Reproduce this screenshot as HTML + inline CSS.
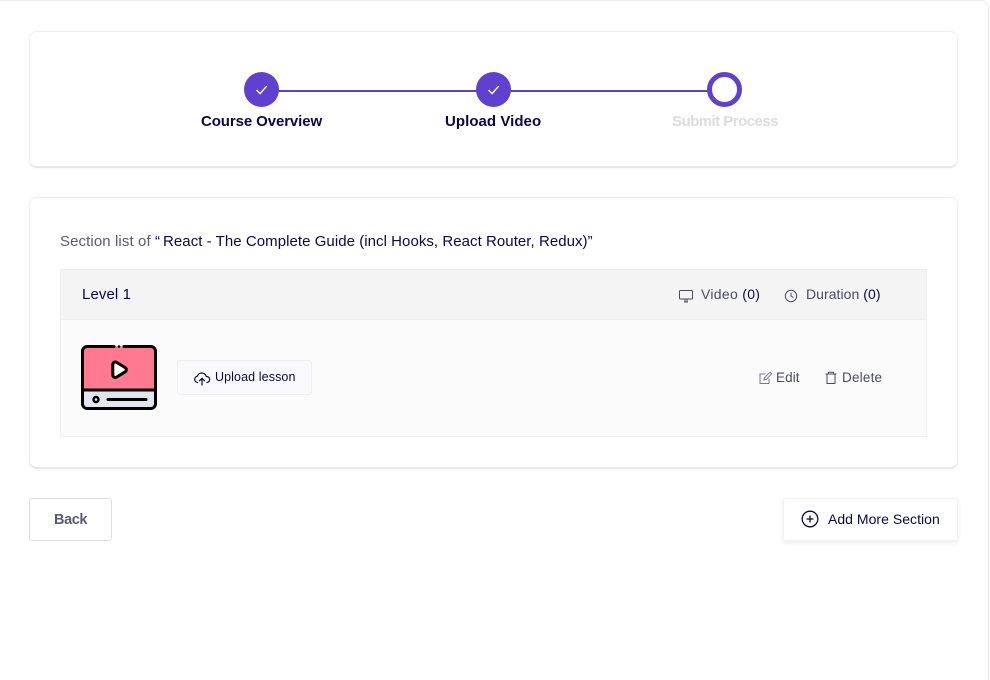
<!DOCTYPE html>
<html>
<head>
<meta charset="utf-8">
<style>
html,body{margin:0;padding:0;background:#fff;width:990px;height:680px;overflow:hidden;}
#w{position:relative;width:990px;height:680px;overflow:hidden;font-family:"Liberation Sans",sans-serif;color:#0b0748;}
.a{position:absolute;}
.t{position:absolute;white-space:nowrap;line-height:20px;height:20px;}
.card{position:absolute;background:#fff;border:1px solid #eeeeee;border-bottom:2px solid #e8e8e8;border-radius:8px;box-sizing:border-box;box-shadow:0 1px 3px rgba(0,0,0,.04);}
.g{color:#4a4a63;}
svg{position:absolute;overflow:visible;}
</style>
</head>
<body>
<div id="w">
<div class="a" style="left:-10px;top:0;width:999px;height:700px;border:1px solid #ededed;border-radius:8px;box-sizing:border-box;border-right:1px solid #ebebeb;"></div>

<div class="card" style="left:29px;top:31px;width:929px;height:137px;"></div>
<div class="a" style="left:262px;top:90px;width:463px;height:2px;background:#5f41cf;"></div>
<div class="a" style="left:244px;top:72px;width:35px;height:35px;border-radius:50%;background:#5f41cf;"></div>
<svg style="left:244px;top:72px" width="35" height="35"><path d="M12.500 18l3.600 3.600 6.600-7.400" fill="none" stroke="#fff" stroke-width="1.400"/></svg>
<div class="a" style="left:476px;top:72px;width:35px;height:35px;border-radius:50%;background:#5f41cf;"></div>
<svg style="left:476px;top:72px" width="35" height="35"><path d="M12.500 18l3.600 3.600 6.600-7.400" fill="none" stroke="#fff" stroke-width="1.400"/></svg>
<div class="a" style="left:707px;top:72px;width:35px;height:35px;border-radius:50%;background:#fff;border:5px solid #5f41cf;box-sizing:border-box;"></div>
<div class="t" style="left:201px;top:112px;font-size:15px;font-weight:700;letter-spacing:-.1px;">Course Overview</div>
<div class="t" style="left:445px;top:112px;font-size:15px;font-weight:700;letter-spacing:.05px;">Upload Video</div>
<div class="t" style="left:672px;top:112px;font-size:15px;font-weight:700;color:#dcdcdc;letter-spacing:-.53px;">Submit Process</div>

<div class="card" style="left:29px;top:197px;width:929px;height:272px;"></div>
<div class="t" style="left:60px;top:232px;font-size:15px;color:#5a5a70;letter-spacing:.1px;">Section list of <span style="color:#0b0748;letter-spacing:.05px;">“<span style="margin-left:3px">React - The Complete Guide (incl Hooks, React Router, Redux)”</span></span></div>

<div class="a" style="left:60px;top:269px;width:867px;height:51px;background:#f4f4f4;border:1px solid #eeeeee;box-sizing:border-box;"></div>
<div class="a" style="left:60px;top:320px;width:867px;height:117px;background:#fbfbfb;border:1px solid #f0f0f0;border-top:0;box-sizing:border-box;"></div>
<div class="t" style="left:82px;top:285px;font-size:15px;letter-spacing:.1px;">Level 1</div>

<svg style="left:679px;top:289px" width="15" height="14" fill="none" stroke="#4a4a63" stroke-width="1"><rect x=".5" y="1.500" width="13" height="8.500" rx="1"/><path d="M5 13h4M6 10v3M8 10v3"/></svg>
<div class="t g" style="left:701px;top:284px;font-size:14px;letter-spacing:.3px;">Video <span style="color:#0b0748">(0)</span></div>
<svg style="left:784px;top:289px" width="14" height="14" fill="none" stroke="#4a4a63" stroke-width="1"><circle cx="7" cy="7" r="5.700"/><path d="M7 3.600V7l2.400 1.600"/></svg>
<div class="t g" style="left:806px;top:284px;font-size:14px;letter-spacing:.05px;">Duration <span style="color:#0b0748">(0)</span></div>

<svg style="left:81px;top:345px" width="76" height="65" viewBox="0 0 76 65">
<rect x="1.200" y="1.200" width="73.600" height="62.600" rx="5" fill="#e1e5ee"/>
<path d="M1.200 45V6.200a5 5 0 0 1 5-5h63.600a5 5 0 0 1 5 5V45z" fill="#ff7a90"/>
<path d="M33 1.500H6.200a4.700 4.700 0 0 0-4.700 4.700v52.600a4.700 4.700 0 0 0 4.700 4.700h63.600a4.700 4.700 0 0 0 4.700-4.700V6.200a4.700 4.700 0 0 0-4.700-4.700H43M1.500 45h73M27 54.500h38" fill="none" stroke="#000" stroke-width="3" stroke-linecap="round"/>
<circle cx="38" cy="1.500" r="1.300" fill="#000"/>
<circle cx="15" cy="54.500" r="3.700" fill="#000"/>
<circle cx="15" cy="54.500" r="1.300" fill="#e1e5ee"/>
<path d="M31.800 19.500v10.500a2.500 2.500 0 0 0 3.800 2.100l8.600-5.300a2.500 2.500 0 0 0 0-4.200l-8.600-5.200a2.500 2.500 0 0 0-3.800 2.100z" fill="#fff" stroke="#000" stroke-width="3" stroke-linejoin="round"/>
</svg>

<div class="a" style="left:177px;top:360px;width:135px;height:35px;background:#f9f9fb;border:1px solid #efefef;border-radius:3px;box-sizing:border-box;"></div>
<svg style="left:194px;top:371px" width="16" height="15" fill="none" stroke="#0b0748" stroke-width="1.200" stroke-linecap="round" stroke-linejoin="round"><path d="M3.500 11.500A3.200 3.200 0 0 1 3.300 5.200 4.700 4.700 0 0 1 12.300 5.500 3 3 0 0 1 13 11.500"/><path d="M8 14V7.500M5.500 9.800 8 7.300l2.500 2.500"/></svg>
<div class="t" style="left:215px;top:367px;font-size:12.500px;letter-spacing:.1px;">Upload lesson</div>

<svg style="left:759px;top:371px" width="13" height="14" fill="none" stroke="#7a7a8c" stroke-width="1"><path d="M10 7.500V12.500H1V3H6.500"/><path d="M5 9l.6-2.400L11 1.200l1.600 1.600L7.300 8.300z"/></svg>
<div class="t g" style="left:776px;top:368px;font-size:13.500px;letter-spacing:.1px;">Edit</div>
<svg style="left:825px;top:371px" width="12" height="14" fill="none" stroke="#4a4a63" stroke-width="1"><path d="M.5 3h11M3.500 3V1.200h5V3M2 3v9.500h8V3"/></svg>
<div class="t g" style="left:842px;top:368px;font-size:13.500px;letter-spacing:.2px;">Delete</div>

<div class="a" style="left:29px;top:498px;width:83px;height:43px;background:#fff;border:1px solid #dedede;border-radius:3px;box-sizing:border-box;"></div>
<div class="t" style="left:54px;top:510px;font-size:14.500px;font-weight:700;color:#5a5a70;letter-spacing:-.4px;">Back</div>

<div class="a" style="left:783px;top:498px;width:175px;height:43px;background:#fff;border:1px solid #f1f1f1;border-radius:3px;box-sizing:border-box;box-shadow:0 2px 5px rgba(0,0,0,.08);"></div>
<svg style="left:801px;top:510px" width="18" height="18" fill="none" stroke="#0b0748" stroke-width="1.300"><circle cx="9" cy="9" r="7.800"/><path d="M5.500 9h7M9 5.500v7"/></svg>
<div class="t" style="left:828px;top:509px;font-size:14px;letter-spacing:.03px;">Add More Section</div>
</div>
</body>
</html>
